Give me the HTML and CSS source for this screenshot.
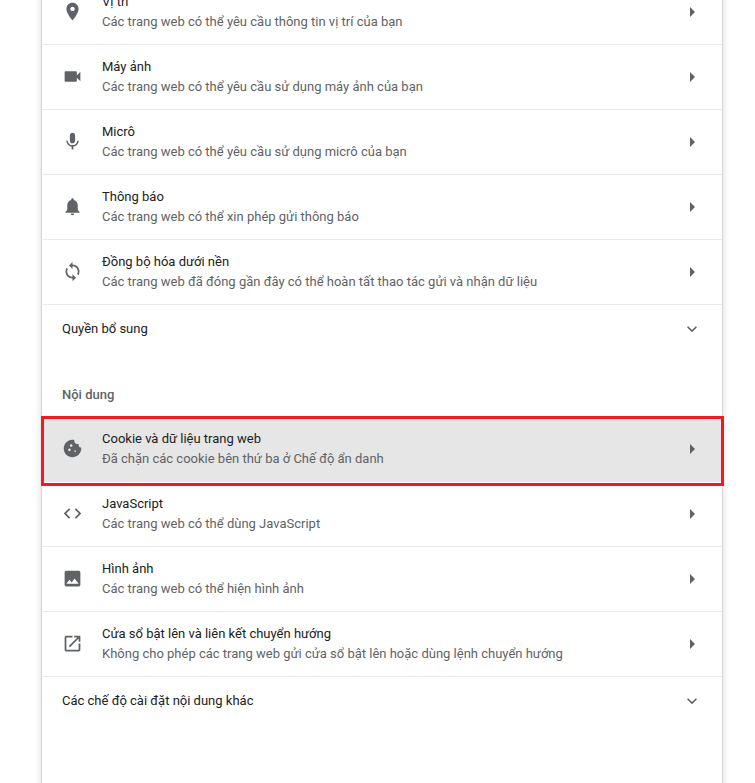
FILE: index.html
```html
<!DOCTYPE html>
<html lang="vi">

<head>
  <meta charset="UTF-8">
  <title>Cài đặt trang web</title>
  <link rel="stylesheet" href="styles.css">
</head>

<body>
  <svg class="sprite" aria-hidden="true">
    <symbol id="i-right" viewBox="0 0 24 24"><path d="M10 17l5-5-5-5v10z"/></symbol>
    <symbol id="i-down" viewBox="0 0 24 24"><path d="M16.59 8.59L12 13.17 7.41 8.59 6 10l6 6 6-6z"/></symbol>
  </svg>

  <main class="card">
    <a class="row">
      <svg class="icon" viewBox="0 0 24 24"><path d="M12 2C8.13 2 5 5.13 5 9c0 5.25 7 13 7 13s7-7.75 7-13c0-3.87-3.13-7-7-7zm0 9.5c-1.38 0-2.5-1.12-2.5-2.5s1.12-2.5 2.5-2.5 2.5 1.12 2.5 2.5-1.12 2.5-2.5 2.5z"/></svg>
      <div class="row-text">
        <p class="row-title">Vị trí</p>
        <p class="row-sub">Các trang web có thể yêu cầu thông tin vị trí của bạn</p>
      </div>
      <svg class="arrow"><use href="#i-right"/></svg>
    </a>
    <a class="row">
      <svg class="icon" viewBox="0 0 24 24"><path d="M17 10.5V7c0-.55-.45-1-1-1H4c-.55 0-1 .45-1 1v10c0 .55.45 1 1 1h12c.55 0 1-.45 1-1v-3.5l4 4v-11l-4 4z"/></svg>
      <div class="row-text">
        <p class="row-title">Máy ảnh</p>
        <p class="row-sub">Các trang web có thể yêu cầu sử dụng máy ảnh của bạn</p>
      </div>
      <svg class="arrow"><use href="#i-right"/></svg>
    </a>
    <a class="row">
      <svg class="icon" viewBox="0 0 24 24"><path d="M12 14c1.66 0 2.99-1.34 2.99-3L15 5c0-1.66-1.34-3-3-3S9 3.34 9 5v6c0 1.66 1.34 3 3 3zm5.3-3c0 3-2.54 5.1-5.3 5.1S6.7 14 6.7 11H5c0 3.41 2.72 6.23 6 6.72V21h2v-3.28c3.28-.48 6-3.3 6-6.72h-1.7z"/></svg>
      <div class="row-text">
        <p class="row-title">Micrô</p>
        <p class="row-sub">Các trang web có thể yêu cầu sử dụng micrô của bạn</p>
      </div>
      <svg class="arrow"><use href="#i-right"/></svg>
    </a>
    <a class="row">
      <svg class="icon" viewBox="0 0 24 24"><path d="M12 22c1.1 0 2-.9 2-2h-4c0 1.1.89 2 2 2zm6-6v-5c0-3.07-1.64-5.64-4.5-6.32V4c0-.83-.67-1.5-1.5-1.5s-1.5.67-1.5 1.5v.68C7.63 5.36 6 7.92 6 11v5l-2 2v1h16v-1l-2-2z"/></svg>
      <div class="row-text">
        <p class="row-title">Thông báo</p>
        <p class="row-sub">Các trang web có thể xin phép gửi thông báo</p>
      </div>
      <svg class="arrow"><use href="#i-right"/></svg>
    </a>
    <a class="row">
      <svg class="icon" viewBox="0 0 24 24"><path d="M12 4V1L8 5l4 4V6c3.31 0 6 2.69 6 6 0 1.01-.25 1.97-.7 2.8l1.46 1.46C19.54 15.03 20 13.57 20 12c0-4.42-3.58-8-8-8zm0 14c-3.31 0-6-2.69-6-6 0-1.01.25-1.97.7-2.8L5.24 7.74C4.46 8.97 4 10.43 4 12c0 4.42 3.58 8 8 8v3l4-4-4-4v3z"/></svg>
      <div class="row-text">
        <p class="row-title">Đồng bộ hóa dưới nền</p>
        <p class="row-sub">Các trang web đã đóng gần đây có thể hoàn tất thao tác gửi và nhận dữ liệu</p>
      </div>
      <svg class="arrow"><use href="#i-right"/></svg>
    </a>
    <a class="row row-more">
      <p class="row-title">Quyền bổ sung</p>
      <svg class="chevron"><use href="#i-down"/></svg>
    </a>

    <h2 class="section-title">Nội dung</h2>

    <a class="row row-marked">
      <svg class="icon" viewBox="0 0 24 24"><path d="M21.95 10.99c-1.79-.03-3.7-1.95-2.68-4.22-2.97 1-5.78-1.59-5.19-4.56C7.11.74 2 6.41 2 12c0 5.52 4.48 10 10 10 5.89 0 10.54-5.08 9.95-11.01zM8.5 15c-.83 0-1.5-.67-1.5-1.5S7.67 12 8.5 12s1.5.67 1.5 1.5S9.33 15 8.5 15zm2-5C9.67 10 9 9.33 9 8.5S9.67 7 10.5 7s1.5.67 1.5 1.5-.67 1.5-1.5 1.5zm4.5 6c-.55 0-1-.45-1-1s.45-1 1-1 1 .45 1 1-.45 1-1 1z"/></svg>
      <div class="row-text">
        <p class="row-title">Cookie và dữ liệu trang web</p>
        <p class="row-sub">Đã chặn các cookie bên thứ ba ở Chế độ ẩn danh</p>
      </div>
      <svg class="arrow"><use href="#i-right"/></svg>
    </a>
    <a class="row">
      <svg class="icon" viewBox="0 0 24 24"><path d="M9.4 16.6L4.8 12l4.6-4.6L8 6l-6 6 6 6 1.4-1.4zm5.2 0l4.6-4.6-4.6-4.6L16 6l6 6-6 6-1.4-1.4z"/></svg>
      <div class="row-text">
        <p class="row-title">JavaScript</p>
        <p class="row-sub">Các trang web có thể dùng JavaScript</p>
      </div>
      <svg class="arrow"><use href="#i-right"/></svg>
    </a>
    <a class="row">
      <svg class="icon" viewBox="0 0 24 24"><path d="M21 19V5c0-1.1-.9-2-2-2H5c-1.1 0-2 .9-2 2v14c0 1.1.9 2 2 2h14c1.1 0 2-.9 2-2zM8.5 13.5l2.5 3.01L14.5 12l4.5 6H5l3.5-4.5z"/></svg>
      <div class="row-text">
        <p class="row-title">Hình ảnh</p>
        <p class="row-sub">Các trang web có thể hiện hình ảnh</p>
      </div>
      <svg class="arrow"><use href="#i-right"/></svg>
    </a>
    <a class="row">
      <svg class="icon" viewBox="0 0 24 24"><path d="M19 19H5V5h7V3H5c-1.11 0-2 .9-2 2v14c0 1.1.89 2 2 2h14c1.1 0 2-.9 2-2v-7h-2v7zM14 3v2h3.59l-9.83 9.83 1.41 1.41L19 6.41V10h2V3h-7z"/></svg>
      <div class="row-text">
        <p class="row-title">Cửa sổ bật lên và liên kết chuyển hướng</p>
        <p class="row-sub">Không cho phép các trang web gửi cửa sổ bật lên hoặc dùng lệnh chuyển hướng</p>
      </div>
      <svg class="arrow"><use href="#i-right"/></svg>
    </a>
    <a class="row row-more">
      <p class="row-title">Các chế độ cài đặt nội dung khác</p>
      <svg class="chevron"><use href="#i-down"/></svg>
    </a>
  </main>
</body>

</html>
```

FILE: styles.css
```css
* {
  margin: 0;
  padding: 0;
  box-sizing: border-box;
}

html,
body {
  height: 100%;
  overflow: hidden;
}

body {
  font-family: Roboto, sans-serif;
  font-size: 13px;
  line-height: 20px;
  background: #ffffff;
}

.sprite {
  display: none;
}

.card {
  width: 680px;
  margin: -21px 0 0 42px;
  padding-bottom: 120px;
  background: #ffffff;
  box-shadow: 0 1px 2px rgba(60, 64, 67, 0.3), 0 2px 6px 2px rgba(60, 64, 67, 0.15);
}

.row {
  position: relative;
  display: flex;
  align-items: center;
  height: 65px;
  padding: 0 8px 1px 20px;
  border-top: 1px solid #e8eaed;
}

.row-more {
  height: 48px;
  padding: 0 20px;
  justify-content: space-between;
}

.row-marked {
  background: #e6e6e6;
}

/* red frame drawn over the row */
.row-marked::after {
  content: "";
  position: absolute;
  top: -1px;
  left: -1px;
  right: -2px;
  bottom: -5px;
  border: 3px solid #ed1c24;
  z-index: 1;
}

.icon {
  flex: none;
  width: 21px;
  height: 21px;
  margin: 0 19.5px 0 -0.5px;
  fill: #5f6368;
}

.row-text {
  flex: 1;
}

.row-title {
  color: #202124;
}

.row-sub {
  color: #5f6368;
}

.arrow {
  flex: none;
  width: 24px;
  height: 24px;
  margin-right: 10px;
  fill: #5f6368;
}

.chevron {
  flex: none;
  width: 20px;
  height: 20px;
  fill: #5f6368;
}

.section-title {
  padding: 33px 20px 11px;
  font-size: 13px;
  font-weight: 500;
  line-height: 20px;
  color: #5f6368;
}
```
